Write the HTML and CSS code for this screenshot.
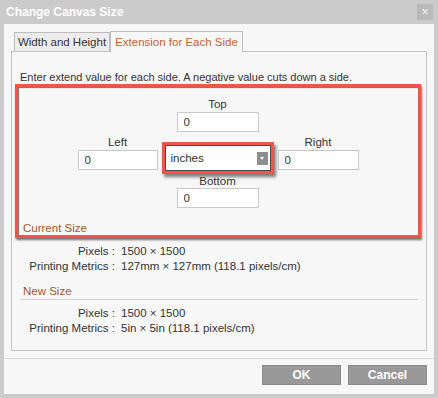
FILE: index.html
```html
<!DOCTYPE html>
<html lang="en">
<head>
    <meta charset="UTF-8">
    <title>Change Canvas Size</title>
    <link rel="stylesheet" href="styles.css">
</head>
<body>
    <div class="dialog">
        <div class="titlebar">
            <span class="title">Change Canvas Size</span>
            <span class="close">&times;</span>
        </div>

        <div class="panel">
            <div class="tabs">
                <div class="tab tab-size">Width and Height</div>
                <div class="tab tab-sides active">Extension for Each Side</div>
            </div>

            <div class="tab-body">
                <p class="intro">Enter extend value for each side. A negative value cuts down a side.</p>

                <div class="highlight">
                    <div class="sides">
                        <label class="lbl lbl-top">Top</label>
                        <input class="num in-top" type="text" value="0">
                        <label class="lbl lbl-left">Left</label>
                        <label class="lbl lbl-right">Right</label>
                        <input class="num in-left" type="text" value="0">
                        <div class="unit">
                            <span>inches</span>
                            <span class="arrow"></span>
                        </div>
                        <input class="num in-right" type="text" value="0">
                        <label class="lbl lbl-bottom">Bottom</label>
                        <input class="num in-bottom" type="text" value="0">
                    </div>
                    <div class="section-title">Current Size</div>
                </div>

                <div class="info">
                    <span class="key">Pixels :</span><span>1500 &times; 1500</span>
                    <span class="key">Printing Metrics :</span><span>127mm &times; 127mm (118.1 pixels/cm)</span>
                </div>

                <div class="section-title new-size">New Size</div>

                <div class="info">
                    <span class="key">Pixels :</span><span>1500 &times; 1500</span>
                    <span class="key">Printing Metrics :</span><span>5in &times; 5in (118.1 pixels/cm)</span>
                </div>
            </div>

            <div class="footer">
                <button class="btn">OK</button>
                <button class="btn">Cancel</button>
            </div>
        </div>
    </div>
</body>
</html>
```

FILE: styles.css
```css
body {
    margin: 0;
    background: #cbcbcb;
    font-family: "Liberation Sans", Arial, sans-serif;
    font-size: 11px;
    color: #333;
}
.dialog {
    width: 438px;
    height: 398px;
    background: #cbcbcb;
}
.titlebar {
    height: 24px;
    display: flex;
    align-items: center;
    justify-content: space-between;
    padding: 0 6px;
}
.title {
    color: #fff;
    font-weight: bold;
    font-size: 12px;
}
.close {
    width: 16px;
    height: 16px;
    margin-right: -1px;
    background: #bababa;
    color: #f4f4f4;
    font-size: 13px;
    line-height: 16px;
    text-align: center;
}
.panel {
    margin: 0 4px;
    height: 370px;
    background: #f7f7f7;
    display: flex;
    flex-direction: column;
}
.tabs {
    display: flex;
    align-items: flex-end;
    padding: 7px 0 0 10px;
}
.tab {
    height: 18px;
    line-height: 18px;
    border: 1px solid #bdbdbd;
    border-bottom: none;
    background: #ededed;
    text-align: center;
    color: #333;
    font-size: 11.5px;
}
.tab-size {
    width: 94px;
}
.tab-sides {
    width: 131px;
}
.tab.active {
    height: 20px;
    line-height: 21px;
    background: #f7f7f7;
    color: #c8602f;
    margin-bottom: -1px;
    position: relative;
}
.tab-body {
    margin: 0 7px;
    height: 298px;
    border: 1px solid #c3c3c3;
}
.intro {
    margin: 0;
    padding: 18px 0 0 8px;
    line-height: 14px;
}
.highlight {
    margin: 0 5px 0 3px;
    padding: 10px 0 0 5px;
    height: 138px;
    border: 3px solid #f0554b;
    box-shadow: inset 1px 1px 1px rgba(0, 0, 0, 0.55), 1px 2px 2px rgba(0, 0, 0, 0.55);
}
.sides {
    display: grid;
    grid-template-columns: 80px 104px 81px;
    grid-template-rows: 14px 22px 16px 22px 17px 20px;
    column-gap: 8px;
    justify-content: center;
    margin-left: -5px;
}
.lbl {
    text-align: center;
    line-height: 14px;
    font-size: 11.5px;
}
.lbl-top { grid-column: 2; grid-row: 1; }
.lbl-left { grid-column: 1; grid-row: 3; align-self: end; }
.lbl-right { grid-column: 3; grid-row: 3; align-self: end; }
.lbl-bottom { grid-column: 2; grid-row: 5; align-self: end; }
.num {
    box-sizing: border-box;
    height: 20px;
    margin: 0;
    padding: 0 6px;
    border: 1px solid #c8c8c8;
    background: #fff;
    font-family: inherit;
    font-size: 11.5px;
    color: #333;
    outline: none;
}
.in-top { grid-column: 2; grid-row: 2; width: 82px; justify-self: center; align-self: center; }
.in-left { grid-column: 1; grid-row: 4; width: 80px; align-self: center; }
.in-right { grid-column: 3; grid-row: 4; width: 81px; align-self: center; }
.in-bottom { grid-column: 2; grid-row: 6; width: 82px; justify-self: center; }
.unit {
    grid-column: 2;
    grid-row: 3 / 5;
    align-self: end;
    height: 24px;
    margin-bottom: 1px;
    background: #fff;
    display: flex;
    align-items: center;
    justify-content: space-between;
    padding: 0 2px 0 5px;
    font-size: 11.5px;
    box-shadow: 0 0 0 1px #4a4a4a, 0 0 0 4px #f0554b, 2px 3px 3px 4px rgba(0, 0, 0, 0.5);
}
.arrow {
    width: 11px;
    height: 13px;
    background: #8e8e8e;
    position: relative;
}
.arrow::after {
    content: "";
    position: absolute;
    left: 3px;
    top: 5px;
    border-left: 2.5px solid transparent;
    border-right: 2.5px solid transparent;
    border-top: 3px solid #fff;
}
.section-title {
    margin-top: 13px;
    line-height: 14px;
    color: #a8552f;
    font-size: 11.5px;
}
.info {
    display: grid;
    grid-template-columns: 103px auto;
    column-gap: 6px;
    line-height: 15px;
    margin-top: 6px;
    font-size: 11.5px;
}
.key {
    text-align: right;
}
.new-size {
    margin: 10px 8px 0;
    padding: 0 0 1px 3px;
    border-bottom: 1px solid #d4d4d4;
}
.footer {
    margin-top: 7px;
    border-top: 1px solid #dcdcdc;
    display: flex;
    justify-content: flex-end;
    gap: 7px;
    padding: 6px 7px 0 0;
}
.btn {
    width: 79px;
    height: 20px;
    padding: 0;
    background: #999;
    border: 1px solid #8a8a8a;
    color: #fff;
    font-family: inherit;
    font-size: 12px;
    font-weight: bold;
}
```
